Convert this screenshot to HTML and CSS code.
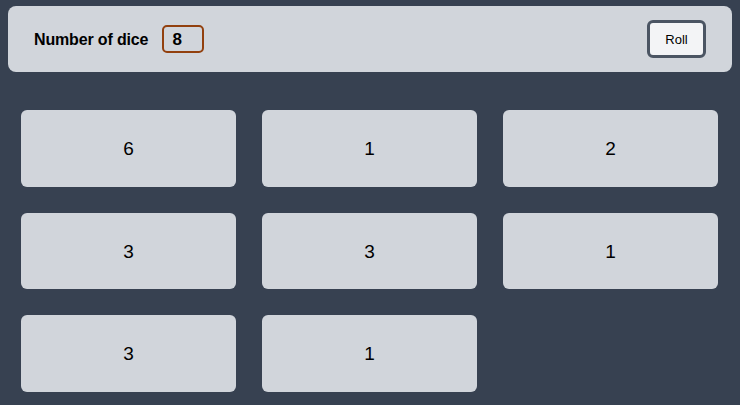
FILE: index.html
```html
<!DOCTYPE html>
<html>
<head>
<meta charset="utf-8">
<link rel="stylesheet" href="styles.css">
</head>
<body>
<header class="bar">
  <label class="field">
    <span class="field-label">Number of dice</span>
    <span class="field-input">8</span>
  </label>
  <button class="roll">Roll</button>
</header>
<main class="dice">
  <div class="die">6</div>
  <div class="die">1</div>
  <div class="die">2</div>
  <div class="die">3</div>
  <div class="die">3</div>
  <div class="die">1</div>
  <div class="die">3</div>
  <div class="die">1</div>
</main>
</body>
</html>
```

FILE: styles.css
```css
html, body {
  margin: 0;
  padding: 0;
}
body {
  background: #374151;
  font-family: "Liberation Sans", Arial, sans-serif;
  color: #000;
  width: 740px;
  height: 405px;
  overflow: hidden;
}
.bar {
  margin: 6px 8px 0 8px;
  height: 66px;
  box-sizing: border-box;
  background: #d1d5db;
  border-radius: 8px;
  display: flex;
  align-items: center;
  justify-content: space-between;
  padding: 0 26px 0 26px;
}
.field {
  display: flex;
  align-items: center;
  gap: 14px;
}
.field-label {
  font-weight: 700;
  font-size: 16px;
  letter-spacing: -0.15px;
  padding-top: 1px;
}
.field-input {
  box-sizing: border-box;
  width: 42px;
  height: 28px;
  border: 2.5px solid #92400e;
  border-radius: 5px;
  font-weight: 700;
  font-size: 17px;
  padding-left: 8px;
  padding-top: 1px;
  display: flex;
  align-items: center;
}
.roll {
  box-sizing: border-box;
  width: 59px;
  height: 38px;
  border: 3px solid #4b5563;
  background: #f3f4f6;
  border-radius: 6px;
  font-family: inherit;
  font-size: 13px;
  color: #000;
  padding: 1px 0 0 0;
}
.dice {
  display: grid;
  grid-template-columns: repeat(3, 215px);
  grid-auto-rows: 76.5px;
  gap: 26px;
  padding: 38px 0 0 21px;
}
.die {
  background: #d1d5db;
  border-radius: 6px;
  display: flex;
  align-items: center;
  justify-content: center;
  font-size: 19px;
  padding-top: 2px;
  box-sizing: border-box;
}
```
